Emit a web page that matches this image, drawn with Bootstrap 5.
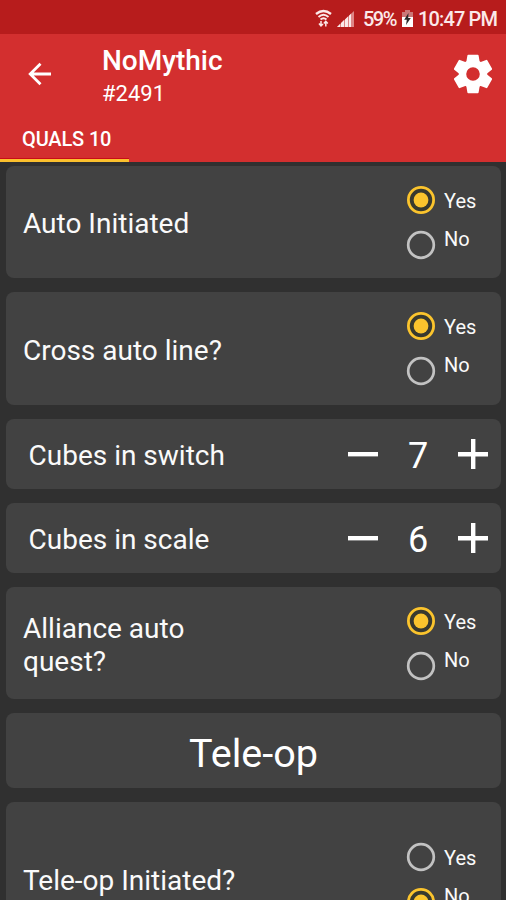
<!DOCTYPE html>
<html lang="en">
<head>
<meta charset="utf-8">
<meta name="viewport" content="width=device-width, initial-scale=1">
<title>NoMythic #2491</title>
<link href="https://cdn.jsdelivr.net/npm/bootstrap@5.3.0/dist/css/bootstrap.min.css" rel="stylesheet">
<style>
html,body{height:900px;overflow:hidden}
body{background:#303030;color:#fff;font-family:Roboto,"Liberation Sans",sans-serif;width:506px}
.statusbar{height:34px;background:#b71c1c;padding:3px 9px 0 0;font-size:20px;line-height:30px;color:#fbe9e9;font-weight:500}
.statusbar span{white-space:nowrap}
.pct{width:34px;letter-spacing:-1.5px;margin-left:8px}
.clock{width:79px;letter-spacing:-.85px;margin-left:4px}
.appbar{height:128px;background:#d32f2f}
.toolbar{height:88px;padding:10px 14px 0 28px}
.back{margin-top:16px;width:74px}
.title{font-size:28px;line-height:33px;font-weight:500}
.team{font-size:22px;line-height:34px}
.gear{margin-top:10px}
.quals{width:129px;height:40px;padding:5px 0 0 22px;font-size:20px;line-height:24px;font-weight:500;letter-spacing:-.15px;border-bottom:3px solid #fbc02d;white-space:nowrap;box-shadow:inset 0 -1px #c80d18}
.form-list{height:738px;overflow:hidden;padding:4px 5px 0 6px;gap:14.1px}
.panel{background:#424242;border-radius:8px;flex:none}
.choice{height:112.4px;padding:0 25px 0 17px}
.counter{height:69.9px;padding:0 12px 0 22.5px}
.heading{height:74.9px;font-size:39.6px;padding-top:6px}
.tall{height:154px}
.question{font-size:28px;line-height:33px;padding-top:3px;white-space:nowrap;color:#fafafa}
.options{width:70px;font-size:20px;line-height:24px;color:#fafafa}
.options svg{flex:none;margin-right:8px}
.yes{height:30px}
.yes span{padding-top:2px}
.no{height:30px;margin-top:15px}
.no span{margin-top:-3px}
.value{font-size:36px;line-height:40px;width:78px;text-align:center;padding-top:4px}
</style>
</head>
<body>
<svg width="0" height="0" class="position-absolute">
  <symbol id="on" viewBox="0 0 30 30"><circle cx="15" cy="15" r="12.6" fill="#38392f" stroke="#fbc42d" stroke-width="2.8"/><circle cx="15" cy="15" r="7.4" fill="#fbc42d"/></symbol>
  <symbol id="off" viewBox="0 0 30 30"><circle cx="15" cy="15" r="12.8" fill="none" stroke="#c2c2c2" stroke-width="2.7"/></symbol>
  <symbol id="minus" viewBox="0 0 32 32"><path d="M1 14h30v4.400H1z" fill="#fff"/></symbol>
  <symbol id="plus" viewBox="0 0 32 32"><path d="M1 14h13V1h4.400v13H31v4.400H18.400V31H14V18.400H1z" fill="#fff"/></symbol>
</svg>

<div class="statusbar d-flex justify-content-end align-items-center">
  <svg width="17" height="20" viewBox="0 0 17 20" fill="none" stroke="#fbe9e9"><path d="M1 5Q8.500-1 16 5" stroke-width="2.400"/><path d="M3.500 8Q8.500 3.500 13.500 8M5.500 10.500Q8.500 8 11.500 10.500" stroke-width="1.900"/><path d="M6 12v5M4 14.500l2 2.500 2-2M10.800 17.500v-5M8.800 14.500l2-2.200 2 2.200" stroke-width="1.500"/></svg>
  <svg class="ms-1" width="19" height="18" viewBox="0 0 19 18"><path d="M1 17 18 1v16z" fill="#df8585"/><path d="M1 17l3-3v3zM5 17v-4l3-3v7zM9 17V9.500l3-3V17zM13 17V5.700l2-2V17z" fill="#fbe9e9"/></svg>
  <span class="pct">59%</span>
  <svg style="margin-left:4px" width="13" height="18" viewBox="0 0 13 18"><path d="M4 0h5v2h3v5H1V2h3z" fill="#cb7777"/><path d="M1 7h11v10H1z" fill="#fff"/><path d="M7.500 3 3.200 9.800h2.600L5 15l4.800-7H7.200z" fill="#292929"/></svg>
  <span class="clock">10:47 PM</span>
</div>

<header class="appbar">
  <div class="toolbar d-flex align-items-start">
    <div class="back"><svg width="24" height="28" viewBox="0 0 24 28" fill="none" stroke="#fff" stroke-width="2.800"><path d="M23 14H3M12.500 3.700 2.200 14l10.300 10.300"/></svg></div>
    <div class="flex-grow-1"><div class="title">NoMythic</div><div class="team">#2491</div></div>
    <svg class="gear" width="38" height="40" viewBox="-19 -20 38 40" fill="#fff">
      <circle r="10.500" fill="none" stroke="#fff" stroke-width="7.400"/>
      <g id="teeth"><path id="tooth" d="M-4.700-19.200h9.400q.8 0 .9.800L6.700-12l-3 2.500h-7.400l-3-2.500 1.100-6.400q.1-.8.9-.8z"/><use href="#tooth" transform="rotate(60)"/><use href="#tooth" transform="rotate(120)"/></g>
      <use href="#teeth" transform="rotate(180)"/>
    </svg>
  </div>
  <div class="quals">QUALS 10</div>
</header>

<main class="form-list d-flex flex-column">
  <div class="panel choice d-flex align-items-center justify-content-between">
    <div class="question">Auto Initiated</div>
    <div class="options"><div class="yes d-flex align-items-center"><svg width="30" height="30"><use href="#on"/></svg><span>Yes</span></div><div class="no d-flex align-items-start"><svg width="30" height="30"><use href="#off"/></svg><span>No</span></div></div>
  </div>
  <div class="panel choice d-flex align-items-center justify-content-between">
    <div class="question">Cross auto line?</div>
    <div class="options"><div class="yes d-flex align-items-center"><svg width="30" height="30"><use href="#on"/></svg><span>Yes</span></div><div class="no d-flex align-items-start"><svg width="30" height="30"><use href="#off"/></svg><span>No</span></div></div>
  </div>
  <div class="panel counter d-flex align-items-center">
    <div class="question me-auto">Cubes in switch</div>
    <svg width="32" height="32"><use href="#minus"/></svg><div class="value">7</div><svg width="32" height="32"><use href="#plus"/></svg>
  </div>
  <div class="panel counter d-flex align-items-center">
    <div class="question me-auto">Cubes in scale</div>
    <svg width="32" height="32"><use href="#minus"/></svg><div class="value">6</div><svg width="32" height="32"><use href="#plus"/></svg>
  </div>
  <div class="panel choice d-flex align-items-center justify-content-between">
    <div class="question">Alliance auto<br>quest?</div>
    <div class="options"><div class="yes d-flex align-items-center"><svg width="30" height="30"><use href="#on"/></svg><span>Yes</span></div><div class="no d-flex align-items-start"><svg width="30" height="30"><use href="#off"/></svg><span>No</span></div></div>
  </div>
  <div class="panel heading d-flex align-items-center justify-content-center">Tele-op</div>
  <div class="panel choice tall d-flex align-items-center justify-content-between">
    <div class="question">Tele-op Initiated?</div>
    <div class="options"><div class="yes d-flex align-items-center"><svg width="30" height="30"><use href="#off"/></svg><span>Yes</span></div><div class="no d-flex align-items-start"><svg width="30" height="30"><use href="#on"/></svg><span>No</span></div></div>
  </div>
</main>
<script src="https://cdn.jsdelivr.net/npm/bootstrap@5.3.0/dist/js/bootstrap.bundle.min.js"></script>
</body>
</html>
